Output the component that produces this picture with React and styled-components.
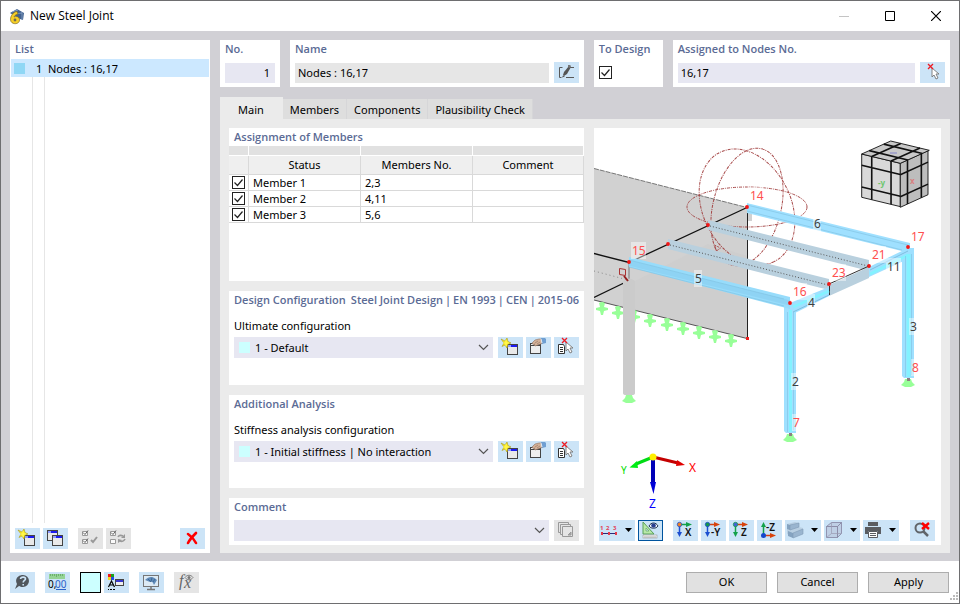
import React from "react";
import styled, { createGlobalStyle, css } from "styled-components";

const GlobalStyle = createGlobalStyle`
  *, *::before, *::after { box-sizing: border-box; }
  body { margin: 0; background: #fff; }
  body, button, input, select {
    font-family: "Noto Sans", "Open Sans", sans-serif;
    font-size: 11px;
    line-height: 16px;
    color: #000;
  }
`;

const color = {
  heading: "#5b6b95",
  body: "#d1d0d5",
  page: "#ebebeb",
  field: "#e7e7f2",
  button: "#cce4f7",
  off: "#e5e5e5",
  cyan: "#ccffff",
};

const checkMark =
  "url(\"data:image/svg+xml,%3Csvg xmlns='http://www.w3.org/2000/svg' viewBox='0 0 11 11'%3E%3Cpath d='M1.5 5.5l3 3 5-6' fill='none' stroke='%23222' stroke-width='1.2'/%3E%3C/svg%3E\")";

/* ---------- window ---------- */

const Window = styled.div`
  display: flex;
  flex-direction: column;
  min-height: 100vh;
  border: 1px solid #6e6e70;
  background: #fff;
`;

const TitleBar = styled.header`
  display: flex;
  align-items: center;
  height: 30px;
  padding-left: 8px;
`;

const Title = styled.h1`
  flex: 1;
  margin: 0 0 0 5px;
  font-family: "Open Sans", sans-serif;
  font-size: 12px;
  font-weight: 400;
  line-height: 16px;
`;

const CaptionButton = styled.button`
  width: 46px;
  height: 30px;
  padding: 0;
  border: 0;
  background: none;
  svg { display: block; margin: 0 auto; }
`;

const Body = styled.main`
  display: flex;
  flex: 1;
  gap: 10px;
  padding: 9px 9px 8px;
  background: ${color.body};
`;

const Panel = styled.section`
  display: flex;
  flex-direction: column;
  min-width: 0;
  padding: 0 5px 4px;
  background: #fff;
`;

const Heading = styled.h2`
  display: flex;
  justify-content: space-between;
  margin: 0;
  font-family: "Open Sans", sans-serif;
  font-size: 11px;
  font-weight: 600;
  line-height: 17px;
  white-space: nowrap;
  color: ${color.heading};
`;

const HeadingParts = styled.span`
  display: flex;
  gap: 2px;
`;

/* ---------- list ---------- */

const ListPanel = styled(Panel)`
  flex: 0 0 200px;
  padding: 0 1px 4px;
`;

const ListHeading = styled(Heading)`
  padding-left: 4px;
`;

const ListBody = styled.ul`
  flex: 1;
  margin: 2px 0 5px;
  padding: 0;
  list-style: none;
  background: linear-gradient(90deg, transparent 21px, #e6e6e6 21px, #e6e6e6 22px, transparent 22px,
    transparent 33px, #e6e6e6 33px, #e6e6e6 34px, transparent 34px);
`;

const ListItem = styled.li`
  display: grid;
  grid-template-columns: 21px 13px 1fr;
  align-items: center;
  height: 18px;
  line-height: 18px;
  background: #cce8ff;
  span:nth-child(2) { padding: 1px 0 0 4px; }
  span:nth-child(3) { padding: 1px 0 0 3px; }
`;

const ListSwatch = styled.span`
  width: 11px;
  height: 11px;
  margin-left: 3px;
  background: #8fd7f5;
`;

/* ---------- buttons ---------- */

const ButtonRow = styled.div`
  display: flex;
  align-items: center;
  gap: 3px;
`;

const ListButtons = styled(ButtonRow)`
  padding: 0 4px;
`;

const IconButton = styled.button`
  display: flex;
  flex: none;
  align-items: center;
  justify-content: center;
  width: ${(p) => (p.$menu ? 36 : 25)}px;
  height: 21px;
  padding: 0;
  border: 0;
  background: ${(p) => (p.disabled ? color.off : color.button)};
  ${(p) => p.$pressed && css`box-shadow: inset 0 0 0 1px #00549e;`}
  svg { display: block; flex: none; }
`;

const Gap = styled.span`
  flex: ${(p) => (p.$fill ? "1" : `0 0 ${p.$size}px`)};
`;

const PushButton = styled.button`
  width: 81px;
  height: 21px;
  padding: 0;
  border: 1px solid #adadad;
  background: #e1e1e1;
`;

/* ---------- header fields ---------- */

const MainColumn = styled.div`
  display: flex;
  flex: 1;
  flex-direction: column;
  min-width: 0;
`;

const FieldRow = styled.div`
  display: flex;
  gap: 10px;
  margin-bottom: 10px;
`;

const FieldPanel = styled(Panel)`
  flex: ${(p) => p.$flex};
`;

const FieldLine = styled.div`
  display: flex;
  align-items: center;
  gap: 5px;
  margin-top: 5px;
  height: 21px;
`;

const TextInput = styled.input`
  flex: 1;
  width: 100%;
  min-width: 0;
  height: 20px;
  padding: 0 3px;
  border: 0;
  background: ${(p) => (p.readOnly ? "#e6e6e6" : color.field)};
`;

const NumberInput = styled(TextInput)`
  padding-right: 5px;
  text-align: right;
`;

const CheckBox = styled.input`
  appearance: none;
  display: block;
  width: 13px;
  height: 13px;
  margin: 0;
  border: 1px solid #222;
  background: #fff;
  &:checked { background-image: ${checkMark}; }
`;

/* ---------- tabs ---------- */

const Tabs = styled.div`
  display: flex;
  align-items: flex-end;
  height: 22px;
`;

const Tab = styled.button`
  height: ${(p) => (p.$active ? 22 : 20)}px;
  padding: ${(p) => (p.$active ? "3px 18px 0" : "1px 7px 0")};
  border: 0;
  border-right: 1px solid ${(p) => (p.$active ? color.page : "#d6d6d8")};
  background: ${(p) => (p.$active ? color.page : "#dedede")};
  white-space: nowrap;
`;

const TabPage = styled.div`
  display: flex;
  flex: 1;
  gap: 10px;
  padding: 9px 9px 8px;
  background: ${color.page};
`;

const Column = styled.div`
  display: flex;
  flex: 355 1 0;
  flex-direction: column;
  gap: 10px;
  min-width: 0;
`;

/* ---------- member table ---------- */

const TablePanel = styled(Panel)`
  flex: 1;
  padding: 0 0 4px;
`;

const TableHeading = styled(Heading)`
  padding: 0 0 1px 5px;
`;

const MemberTable = styled.table`
  width: 100%;
  table-layout: fixed;
  border-collapse: separate;
  border-spacing: 0;
  th, td {
    padding: 0 4px;
    border-right: 1px solid #d9d9d9;
    border-bottom: 1px solid #d9d9d9;
    text-align: left;
    font-weight: 400;
  }
  th { height: 19px; background: #efefef; text-align: center; }
  td { height: 16px; line-height: 15px; }
  td:first-child { padding: 0 0 0 3px; }
  tr:first-child > td[data-band] {
    height: 10px;
    padding: 0;
    border-color: #fff;
    background: #e1e1e1;
  }
`;

/* ---------- configuration ---------- */

const ConfigPanel = styled(Panel)`
  padding-bottom: ${(p) => p.$bottom}px;
`;

const FieldLabel = styled.label`
  margin: 9px 0 3px;
  line-height: 17px;
`;

const Combo = styled.div`
  display: flex;
  flex: 1;
  align-items: center;
  gap: 3px;
  min-width: 0;
  height: 21px;
  padding: 0 4px 0 5px;
  background: ${color.field};
  svg { flex: none; }
`;

const ConfigLine = styled.div`
  display: flex;
  gap: 5px;
`;

const ComboSwatch = styled.span`
  flex: none;
  width: 11px;
  height: 11px;
  background: ${color.cyan};
`;

const ComboSelect = styled.select`
  appearance: none;
  flex: 1;
  min-width: 0;
  height: 21px;
  padding: 1px 2px 0;
  border: 0;
  background: transparent;
`;

/* ---------- model view ---------- */

const ViewPanel = styled.section`
  display: flex;
  flex: 347 1 0;
  flex-direction: column;
  min-width: 0;
  padding-bottom: 4px;
  background: #fff;
`;

const Scene = styled.svg`
  display: block;
  flex: 1;
  width: 100%;
  min-height: 0;
`;

const NodeLabel = styled.text`
  font-size: 12px;
  fill: ${(p) => (p.$member ? "#404040" : "#ff4f4f")};
`;

const ViewButtons = styled(ButtonRow)`
  padding: 4px 5px 0;
`;

const Footer = styled.footer`
  display: flex;
  align-items: center;
  gap: 10px;
  height: 42px;
  padding-left: 9px;
`;

const ColorButton = styled.button`
  width: 21px;
  height: 21px;
  padding: 0;
  border: 1px solid #000;
  background: ${color.cyan};
`;

const Grip = styled.svg`
  align-self: flex-end;
  margin: 0 0 2px -10px;
`;

/* ---------- icons ---------- */

const Icon = ({ children, w = 25 }) => (
  <svg width={w} height="21" viewBox={`0 0 ${w} 21`} fill="none" aria-hidden="true">
    {children}
  </svg>
);

const MiniWindow = ({ x, y }) => (
  <g>
    <rect x={x} y={y} width="11" height="11" fill="#444" />
    <rect x={x + 1} y={y + 1} width="9" height="2" fill="#8d9bff" />
    <rect x={x + 4} y={y + 1} width="6" height="2" fill="#1c1cf0" />
    <rect x={x + 1} y={y + 3} width="9" height="7" fill="#e9e9e9" />
  </g>
);

const Star = ({ x, y }) => (
  <g transform={`translate(${x} ${y})`}>
    <path d="M-5-4L-1-2 1-5 2-1.500 5 0 2 1 1 5-1 2-4 3.500-2 0z" fill="#ffee20" stroke="#a8981c" strokeWidth=".6" />
    <path d="M0-3V3M-3 0H3" stroke="#fff95e" />
  </g>
);

const NewIcon = () => (
  <Icon><MiniWindow x={9} y={7} /><Star x={8} y={6} /></Icon>
);

const CopyIcon = () => (
  <Icon><MiniWindow x={4} y={2} /><MiniWindow x={9} y={7} /></Icon>
);

const EditWindowIcon = () => (
  <Icon>
    <rect x="4" y="6" width="11" height="11" fill="#444" />
    <rect x="5" y="9" width="9" height="7" fill="#eee" />
    <path d="M5 7.500h4" stroke="#eee" />
    <path d="M6 6l3-3 4-1h3l1 4-5 2-3 1-1-1 1-1-2 .5z" fill="#d3b097" stroke="#8d705f" strokeWidth=".6" />
    <path d="M9 6l3-2M11 7l3-2" stroke="#8d705f" strokeWidth=".6" />
    <path d="M15 1h4l1 1v4l-4 1z" fill="#6f9fd2" />
    <path d="M15 2l1 4" stroke="#e5edf4" />
  </Icon>
);

const Cursor = ({ x, y }) => (
  <path
    transform={`translate(${x} ${y})`}
    d="M0 0v9l2-2 2 4 2-1-2-4h3z"
    fill="#fff"
    stroke="#777"
    strokeWidth=".9"
  />
);

const PickIcon = () => (
  <Icon>
    <Cursor x={12} y={6} />
    <path d="M8 2l5 5M13 2l-5 5" stroke="#ed1c24" strokeWidth="1.300" />
  </Icon>
);

const PickListIcon = () => (
  <Icon>
    <path d="M4.500 7.500h5l1 2v7h-6z" fill="#fff" stroke="#333" />
    <path d="M6 10.500h3M6 12.500h3M6 14.500h3" stroke="#333" />
    <Cursor x={12} y={5} />
    <path d="M8 1l5 5M13 1l-5 5" stroke="#ed1c24" strokeWidth="1.300" />
  </Icon>
);

const RenameIcon = () => (
  <Icon>
    <path d="M8.500 5.500h-3v10h2M12 15.500h8M16 5.500h4" stroke="#595959" />
    <path d="M9 13l1-3 5-6 2 1-4 7-3 2z" fill="#555" />
    <path d="M14 3l2 0 1 1-1 2-2-1z" fill="#777" />
    <path d="M8 15.500l1-2 2 1z" fill="#555" />
  </Icon>
);

const LibraryIcon = () => (
  <Icon>
    <g stroke="#999" fill="#e5e5e5">
      <path d="M4.500 2.500h10v10h-10z" />
      <path d="M6.500 4.500h10v10h-10z" />
      <path d="M8.500 6.500h10v10h-10z" />
      <path d="M14 15l3-3v3z" fill="#aaa" />
    </g>
  </Icon>
);

const SelectAllIcon = () => (
  <Icon>
    <path d="M4.500 3.500h5v4h-5zM4.500 11.500h5v4h-5z" fill="#fafafa" stroke="#999" />
    <path d="M5 4.500l2 2 3-4M5 12.500l2 2 3-4" stroke="#666" />
    <path d="M13 12l2 2 4-5" stroke="#999" strokeWidth="2" />
  </Icon>
);

const InvertIcon = () => (
  <Icon>
    <path d="M4.500 3.500h5v4h-5zM4.500 11.500h5v4h-5z" fill="#fafafa" stroke="#999" />
    <path d="M5 4.500l2 2 3-4" stroke="#666" />
    <path d="M12 9c1-2 3-2 5-1M19 11c-1 2-3 3-5 2" stroke="#999" strokeWidth="1.600" />
    <path d="M19 6v4h-4zM12 15v-4l4 1z" fill="#999" />
  </Icon>
);

const DeleteIcon = () => (
  <Icon><path d="M8 6c3 2 6 5 8 9M16 5c-3 3-6 6-8 10" stroke="#f00" strokeWidth="2.600" strokeLinecap="round" /></Icon>
);

const HelpIcon = () => (
  <Icon>
    <path d="M13 3a6 6 0 0 1 0 12c-2 0-3-.5-4-1l-4 3 2-5a6 6 0 0 1 6-9z" fill="#50565c" />
    <path d="M10.500 7c.3-2.500 5-2.500 5 0 0 1.500-2.300 1.500-2.300 3.500M13.200 12v1.500" stroke="#cce4f7" strokeWidth="1.600" />
  </Icon>
);

const UnitText = styled.text`
  font: 10px "Noto Sans", sans-serif;
`;

const UnitsIcon = () => (
  <Icon>
    <rect x="4" y="2" width="16" height="5" fill="#94d394" />
    <path d="M5.500 2v2M7.500 2v2M9.500 2v2M11.500 2v3M13.500 2v2M15.500 2v2M17.500 2v2" stroke="#5aa15a" strokeWidth=".7" />
    <UnitText x="3" y="16" fill="#000">0,</UnitText>
    <UnitText x="10" y="16" fill="#2b62c9">00</UnitText>
    <path d="M11 17.500h10" stroke="#2b62c9" />
  </Icon>
);

const DisplayIcon = () => (
  <Icon>
    <path d="M4 2h3v3h-3z" fill="#f01818" /><path d="M7 2h3v3h-3z" fill="#19a019" />
    <path d="M4 5h3v3h-3z" fill="#f4d81c" /><path d="M7 5h3v3h-3z" fill="#2449e8" />
    <path d="M4.500 15L7.500 9 10.500 15M5.500 13h4" stroke="#000" strokeWidth="1.200" />
    <path d="M4 17.500h1M6 17.500h2M9 17.500h2" stroke="#000" />
    <rect x="11" y="7" width="9" height="7" fill="#444" />
    <path d="M12 8h7v2h-7z" fill="#3838cf" /><path d="M12 10h7v3h-7z" fill="#eee" />
  </Icon>
);

const MonitorIcon = () => (
  <Icon>
    <rect x="4.500" y="3.500" width="15" height="11" fill="#dceaf5" stroke="#767676" />
    <path d="M12 15v2M8 17.500h8" stroke="#767676" strokeWidth="1.500" />
    <path d="M6 8c4-4 8-4 12 0l-3 5c-1-3-2-4-4-3z" fill="#5f8ab8" />
    <path d="M9 7l3 3M13 5.500l-1 4M16 7l-2 3" stroke="#365f8c" strokeWidth=".8" />
  </Icon>
);

const FxText = styled.text`
  font: italic 16px "Liberation Serif", serif;
`;

const FormulaIcon = () => (
  <Icon>
    <FxText x="5" y="14" fill="#666">f</FxText>
    <FxText x="10" y="16" fill="#666">x</FxText>
    <path d="M11 5.500c2-3 6-3 8 0-2 3-6 3-8 0z" stroke="#808080" />
    <circle cx="15" cy="5.500" r="1.500" fill="#777" />
  </Icon>
);

const MenuArrow = () => <path d="M26 8h7l-3.500 4z" fill="#000" />;

const TinyText = styled.text`
  font: 700 6px "Noto Sans", sans-serif;
`;

const NumberingIcon = () => (
  <Icon w={36}>
    <TinyText x="1" y="10" fill="#e04258">1</TinyText>
    <TinyText x="7" y="10" fill="#e04258">2</TinyText>
    <TinyText x="14" y="10" fill="#e04258">3</TinyText>
    <path d="M3 13.500h15" stroke="#2a2a78" />
    <path d="M2 12h2v3h-2zM9 12h2v3h-2zM16 12h2v3h-2z" fill="#e8384a" />
    <MenuArrow />
  </Icon>
);

const MeasureIcon = () => (
  <Icon>
    <path d="M5 2v12h11z" fill="#b7e8a8" stroke="#58a058" />
    <path d="M8 8v3h3z" fill="#cce4f7" stroke="#58a058" strokeWidth=".6" />
    <rect x="5" y="15" width="14" height="3" fill="#f4f4f4" stroke="#999" strokeWidth=".6" />
    <path d="M7 16v2M9 16v2M11 16v2M13 16v2M15 16v2M17 16v2" stroke="#888" strokeWidth=".6" />
    <path d="M11 6c2-4 7-4 9 0-2 3-7 3-9 0z" fill="#fff" stroke="#243852" />
    <circle cx="15.500" cy="5.500" r="2.300" fill="#283f8f" />
  </Icon>
);

const AxisText = styled.text`
  font: 600 10px "Noto Sans", sans-serif;
`;

const AxisIcon = ({ label, h, v, dot, up }) => (
  <Icon>
    {up ? (
      <>
        <path d="M6.500 15V5" stroke={v} strokeWidth="1.500" /><path d="M4 7l2.500-5L9 7z" fill={v} />
        <path d="M8 15.500h6" stroke={h} strokeWidth="1.500" /><path d="M13 13l6 2.500-6 2.500z" fill={h} />
        <circle cx="6.500" cy="15.500" r="2.500" fill={dot} />
        <AxisText x="9" y="11" fill="#111">{label}</AxisText>
      </>
    ) : (
      <>
        <path d="M6.500 6v8" stroke={v} strokeWidth="1.500" /><path d="M4 12l2.500 5L9 12z" fill={v} />
        <path d="M8 4.500h6" stroke={h} strokeWidth="1.500" /><path d="M13 2l6 2.500-6 2.500z" fill={h} />
        <circle cx="6.500" cy="4.500" r="2.200" fill={dot} stroke={v} strokeWidth=".8" />
        <AxisText x={label.length > 1 ? 10 : 12} y="16" fill="#111">{label}</AxisText>
      </>
    )}
  </Icon>
);

const ShadingIcon = () => (
  <Icon w={36}>
    <path d="M2 4l8-2 4 1v4l4 1v5l-8 4-8-3z" fill="#b9cfe2" />
    <path d="M2 4l3 1v5l-3-1zM3 11l5 2v5l-5-2z" fill="#85a3c0" />
    <path d="M5 5l9-2v4l-9 3zM8 13l10-4v5l-10 4z" fill="#9ab5cf" stroke="#7f9ab6" strokeWidth=".6" />
    <MenuArrow />
  </Icon>
);

const BoxIcon = () => (
  <Icon w={36}>
    <path d="M2.500 6.500l5-4h10l-4 4zM13.500 6.500l4-4v11l-4 4zM2.500 6.500h11v11h-11z" fill="#b9c6dd" fillOpacity=".7" stroke="#8b8ca8" strokeWidth=".9" />
    <path d="M7.500 2.500v11h10M7.500 13.500l-5 4" stroke="#9a9ab2" strokeWidth=".7" />
    <MenuArrow />
  </Icon>
);

const PrintIcon = () => (
  <Icon w={36}>
    <path d="M5 2h10v4h-10zM2 7h16v7h-3v-3h-10v3h-3z" fill="#5a5d62" />
    <path d="M5.500 11.500h9v6h-9z" fill="#fff" stroke="#5a5d62" />
    <path d="M7 13.500h6M7 15.500h6" stroke="#5a5d62" />
    <MenuArrow />
  </Icon>
);

const ClearSearchIcon = () => (
  <Icon>
    <circle cx="10" cy="8" r="4.500" stroke="#60656a" strokeWidth="2" />
    <path d="M13 11l5 5" stroke="#60656a" strokeWidth="2.500" />
    <path d="M12 3l7 6M19 3l-7 6" stroke="#f00" strokeWidth="2.400" />
  </Icon>
);

const Chevron = () => (
  <svg width="11" height="7" viewBox="0 0 11 7" fill="none" aria-hidden="true">
    <path d="M1 1l4.500 4.500L10 1" stroke="#555" strokeWidth="1.200" />
  </svg>
);

const AppIcon = () => (
  <svg width="16" height="17" viewBox="0 0 16 17" aria-hidden="true">
    <path d="M1 5l7-4 7 4-1 7-3-1z" fill="#41618e" />
    <path d="M3 4l6-2M5 6l8-1M13 4v8" stroke="#8ba5c9" strokeWidth=".8" />
    <path d="M8 3.500C4 4 1.500 8 1.500 11.500c0 5.500 9 5.500 9 .5 0-3-3-4.500-5.500-3C5.500 7.500 7 6.500 9 6z" fill="#f6cf25" stroke="#7d6a24" strokeWidth=".7" />
    <circle cx="6" cy="12" r="1.400" fill="#6f6a50" />
  </svg>
);

/* ---------- navigation cube ---------- */

const cuts = [0, 0.26, 0.76, 1];

const cubeFaces = [
  { o: [861.7, 154], u: [38.6, 9.300], v: [0, 43.300], fill: "#d9d9d9" },
  { o: [900.3, 163.3], u: [27.7, -12.600], v: [0, 44], fill: "#bdbdbd" },
  { o: [861.7, 154], u: [38.6, 9.300], v: [29, -13], fill: "#c9c9c9" },
];

const facePoint = (face, s, t) =>
  `${face.o[0] + face.u[0] * s + face.v[0] * t},${face.o[1] + face.u[1] * s + face.v[1] * t}`;

const NavText = styled.text`
  font: 700 8px "Noto Sans", sans-serif;
`;

const NavCube = () => (
  <g stroke="#111" strokeLinejoin="round">
    {cubeFaces.map((face, i) => (
      <g key={i}>
        <path
          d={`M${facePoint(face, 0, 0)}L${facePoint(face, 1, 0)}L${facePoint(face, 1, 1)}L${facePoint(face, 0, 1)}z`}
          fill={face.fill}
          strokeWidth=".9"
        />
        {cuts.slice(1, 3).map((c) => (
          <path
            key={c}
            d={`M${facePoint(face, c, 0)}L${facePoint(face, c, 1)}M${facePoint(face, 0, c)}L${facePoint(face, 1, c)}`}
            strokeWidth="1.600"
          />
        ))}
      </g>
    ))}
    <g stroke="none">
      <NavText x="878" y="186" fill="#6cc66c">-y</NavText>
      <NavText x="910" y="184" fill="#d98080">x</NavText>
      <path d="M890 153h7" stroke="#9a9ac8" strokeWidth="1.500" />
    </g>
  </g>
);

/* ---------- structural model ---------- */

const nodeLabels = [
  ["14", 750, 200], ["15", 632, 255], ["17", 911, 241], ["21", 872, 259],
  ["23", 832, 277], ["16", 793, 296], ["7", 793, 427], ["8", 912, 372],
];

const memberLabels = [
  ["6", 814, 228], ["5", 695, 283], ["11", 887, 271],
  ["4", 808, 307], ["3", 910, 331], ["2", 792, 386],
];

const nodes = [
  [747, 207], [708, 225], [668, 244], [629, 262], [908, 247], [869, 266], [829, 284], [790, 303],
];

const lineSupports = [602, 618, 634, 650, 667, 683, 699, 715, 731];
const baseSupports = [[629, 395], [790, 434], [908, 379]];

const LabelSet = ({ items, member }) =>
  items.map(([text, x, y]) => (
    <g key={text}>
      <rect x={x - 1} y={y - 13} width={text.length * 7 + 1} height="17" fill="#fff" fillOpacity=".45" />
      <NodeLabel $member={member} x={x} y={y}>{text}</NodeLabel>
    </g>
  ));

const AxisLabel = styled.text`
  font-size: ${(p) => p.$size || 12}px;
`;

const Model = () => (
  <Scene viewBox="594 128 347 388" role="img" aria-label="Steel joint model">
    <path d="M594 168.500L747 207.500V338.500L594 300z" fill="#d1d1d1" />
    <path d="M635 281L708 244 747 256V338L635 310z" fill="#cecece" />
    <path d="M747 207H752V221H747z" fill="#d1d1d1" />
    <path d="M594 168.500L747 207.500" stroke="#777" strokeDasharray="5 1" />
    <path d="M594 300L747 338.500" stroke="#555" />
    <path d="M747.500 210V338" stroke="#222" />
    <g fill="#98ff98">
      {lineSupports.map((x) => (
        <path
          key={x}
          transform={`translate(${x} ${303 + Math.round((x - 602) / 4)})`}
          d="M-3 0Q0-2 3 0L2 4 6 5 6 7 2 8 1 12H-1L-2 8-6 7-6 5-2 4z"
        />
      ))}
      {baseSupports.map(([x, y]) => (
        <path key={x} transform={`translate(${x} ${y})`} d="M-3 0H3L4 3 7 6 3 8H-3L-7 6-4 3z" />
      ))}
    </g>
    <g fill="none" stroke="#a03a3a" strokeWidth="1" strokeDasharray="3 1 1 1" opacity=".9">
      <ellipse cx="747" cy="207" rx="60" ry="20" />
      <ellipse cx="747" cy="207" rx="61" ry="44" transform="rotate(63.600 747 207)" />
      <ellipse cx="747" cy="207" rx="60" ry="34" transform="rotate(-75.800 747 207)" />
    </g>
    <g fill="none" stroke="#111">
      <path d="M594 253.500L629 262.500L747 207.500" strokeWidth="1.300" />
      <path d="M629 262V281" stroke="#777" />
      <path d="M594 297.500L628 281" strokeWidth="1.300" />
      <path d="M594 271L628 280" stroke="#888" strokeDasharray="1 3" />
    </g>
    <path d="M623 281Q629 276 635 281V393Q635 395 632 395H626Q623 395 623 393z" fill="#cbcbcb" />
    <path d="M619.500 268.500l6 1v6l-6-1z" fill="none" stroke="#a33" />
    <path d="M624 276l4 5" stroke="#932020" strokeWidth="2" />
    <path d="M714.500 245l6 3-4 3z" fill="none" stroke="#a55" strokeDasharray="2 1" />

    <g fill="#b9d0de">
      <path d="M708 220L869 260V271L708 230z" />
      <path d="M668 239L829 279V290L668 249z" />
      <path d="M829 285L869 267V278L829 296z" />
    </g>
    <g fill="none" stroke="#555" strokeDasharray="1 2">
      <path d="M710 226L868 266" />
      <path d="M670 245L828 285" />
    </g>
    <path d="M829 284L869 266M829.500 286v9M869.500 268v8" stroke="#333" fill="none" />

    <g fill="#9fe0ff">
      <path d="M747 203L910 243V253L747 213z" />
      <path d="M869 267L908 248V259L869 277z" />
      <path d="M790 303L829 287V296L793 314z" />
      <path d="M902 248H914V378H904L902 376z" />
      <path d="M784 304H796V433H786L784 431z" />
    </g>
    <path d="M629 257L790 297V309L629 267z" fill="#97dcfb" />
    <path d="M629 263L790 303" stroke="#8ed3f4" strokeWidth="5" />
    <g fill="none" stroke="#83f2ff">
      <path d="M790.500 310V432" strokeWidth="3" />
      <path d="M908.500 254V377" strokeWidth="4" />
      <path d="M870 274L908 255M793 307L829 291" strokeWidth="3" />
    </g>
    <g fill="none" stroke="#7fbfdf" strokeWidth="1">
      <path d="M787.500 312V432M793.500 312V430M905.500 256V377M911.500 254V375" opacity=".6" />
      <path d="M629 267L784 306M629 260L784 299M747 211L902 250M747 205L908 245" opacity=".6" />
      <path d="M870 270L908 251M793 312L829 295" />
    </g>
    {nodes.map(([x, y]) => <circle key={x} cx={x} cy={y} r="1.900" fill="#f21616" />)}
    <path d="M746 337h3v3h-3z" fill="#f02020" />
    <path d="M789 433h3v3h-3zM907 378h3v3h-3z" fill="#8b8080" />
    <LabelSet items={nodeLabels} />
    <LabelSet items={memberLabels} member />

    <g fill="none" strokeWidth="3">
      <path d="M653 457L678 463" stroke="#c40000" />
      <path d="M653 457L636 464" stroke="#00dc14" />
      <path d="M653 457V484" stroke="#0000b8" strokeWidth="4" />
    </g>
    <path d="M677 460L685 465 676 466z" fill="#e00000" />
    <path d="M637 461L629.500 467.500 638 468z" fill="#00ee14" />
    <path d="M650 482H656L653.500 494z" fill="#0000d8" />
    <circle cx="653" cy="457" r="3.500" fill="#fff000" />
    <AxisLabel x="689" y="472" fill="#f00">X</AxisLabel>
    <AxisLabel x="621" y="474" fill="#0d0" $size={10}>Y</AxisLabel>
    <AxisLabel x="649" y="508" fill="#00f">Z</AxisLabel>
    <NavCube />
  </Scene>
);

/* ---------- page ---------- */

const members = [
  ["Member 1", "2,3"],
  ["Member 2", "4,11"],
  ["Member 3", "5,6"],
];

const ConfigRow = ({ id, option }) => (
  <ConfigLine>
    <Combo>
      <ComboSwatch />
      <ComboSelect id={id}><option>{option}</option></ComboSelect>
      <Chevron />
    </Combo>
    <ButtonRow>
      <IconButton aria-label="New configuration"><NewIcon /></IconButton>
      <IconButton aria-label="Edit configuration"><EditWindowIcon /></IconButton>
      <IconButton aria-label="Pick configuration"><PickListIcon /></IconButton>
    </ButtonRow>
  </ConfigLine>
);

export default function App() {
  return (
    <Window>
      <GlobalStyle />
      <TitleBar>
        <AppIcon />
        <Title>New Steel Joint</Title>
        <CaptionButton aria-label="Minimize" disabled>
          <svg width="10" height="10" viewBox="0 0 10 10"><path d="M0 5.500h10" stroke="#c4c4c4" /></svg>
        </CaptionButton>
        <CaptionButton aria-label="Maximize">
          <svg width="10" height="10" viewBox="0 0 10 10"><path d="M.5.5h9v9h-9z" fill="none" stroke="#000" /></svg>
        </CaptionButton>
        <CaptionButton aria-label="Close">
          <svg width="10" height="10" viewBox="0 0 10 10"><path d="M0 0l10 10M10 0L0 10" stroke="#000" strokeWidth="1.200" /></svg>
        </CaptionButton>
      </TitleBar>

      <Body>
        <ListPanel>
          <ListHeading>List</ListHeading>
          <ListBody>
            <ListItem><ListSwatch /><span>1</span><span>Nodes : 16,17</span></ListItem>
          </ListBody>
          <ListButtons>
            <IconButton aria-label="New"><NewIcon /></IconButton>
            <IconButton aria-label="Copy"><CopyIcon /></IconButton>
            <Gap $size={4} />
            <IconButton aria-label="Select all" disabled><SelectAllIcon /></IconButton>
            <IconButton aria-label="Invert selection" disabled><InvertIcon /></IconButton>
            <Gap $fill />
            <IconButton aria-label="Delete"><DeleteIcon /></IconButton>
          </ListButtons>
        </ListPanel>

        <MainColumn>
          <FieldRow>
            <FieldPanel $flex="0 0 60px">
              <Heading as="label" htmlFor="no">No.</Heading>
              <FieldLine><NumberInput id="no" defaultValue="1" /></FieldLine>
            </FieldPanel>
            <FieldPanel $flex="294 1 0">
              <Heading as="label" htmlFor="name">Name</Heading>
              <FieldLine>
                <TextInput id="name" value="Nodes : 16,17" readOnly />
                <IconButton aria-label="Edit name"><RenameIcon /></IconButton>
              </FieldLine>
            </FieldPanel>
            <FieldPanel $flex="0 0 69px">
              <Heading as="label" htmlFor="design">To Design</Heading>
              <FieldLine><CheckBox id="design" type="checkbox" defaultChecked /></FieldLine>
            </FieldPanel>
            <FieldPanel $flex="277 1 0">
              <Heading as="label" htmlFor="assigned">Assigned to Nodes No.</Heading>
              <FieldLine>
                <TextInput id="assigned" defaultValue="16,17" />
                <IconButton aria-label="Pick nodes"><PickIcon /></IconButton>
              </FieldLine>
            </FieldPanel>
          </FieldRow>

          <Tabs role="tablist">
            <Tab role="tab" aria-selected="true" $active>Main</Tab>
            <Tab role="tab">Members</Tab>
            <Tab role="tab">Components</Tab>
            <Tab role="tab">Plausibility Check</Tab>
          </Tabs>

          <TabPage>
            <Column>
              <TablePanel>
                <TableHeading>Assignment of Members</TableHeading>
                <MemberTable>
                  <colgroup><col width="20" /><col width="112" /><col width="112" /><col /></colgroup>
                  <thead>
                    <tr><td data-band /><td data-band /><td data-band /><td data-band /></tr>
                    <tr><th aria-label="Active" /><th>Status</th><th>Members No.</th><th>Comment</th></tr>
                  </thead>
                  <tbody>
                    {members.map(([name, numbers]) => (
                      <tr key={name}>
                        <td><CheckBox type="checkbox" aria-label={name} defaultChecked /></td>
                        <td>{name}</td>
                        <td>{numbers}</td>
                        <td />
                      </tr>
                    ))}
                  </tbody>
                </MemberTable>
              </TablePanel>

              <ConfigPanel $bottom={27}>
                <Heading>
                  <span>Design Configuration</span>
                  <HeadingParts>
                    <span>Steel Joint Design</span>
                    <span>|</span>
                    <span>EN 1993</span>
                    <span>|</span>
                    <span>CEN</span>
                    <span>|</span>
                    <span>2015-06</span>
                  </HeadingParts>
                </Heading>
                <FieldLabel htmlFor="ultimate">Ultimate configuration</FieldLabel>
                <ConfigRow id="ultimate" option="1 - Default" />
              </ConfigPanel>

              <ConfigPanel $bottom={26}>
                <Heading>Additional Analysis</Heading>
                <FieldLabel htmlFor="stiffness">Stiffness analysis configuration</FieldLabel>
                <ConfigRow id="stiffness" option="1 - Initial stiffness | No interaction" />
              </ConfigPanel>

              <ConfigPanel $bottom={4}>
                <Heading as="label" htmlFor="comment">Comment</Heading>
                <FieldLine>
                  <Combo>
                    <ComboSelect id="comment"><option /></ComboSelect>
                    <Chevron />
                  </Combo>
                  <IconButton aria-label="Comment library" disabled><LibraryIcon /></IconButton>
                </FieldLine>
              </ConfigPanel>
            </Column>

            <ViewPanel>
              <Model />
              <ViewButtons>
                <IconButton $menu aria-label="Numbering"><NumberingIcon /></IconButton>
                <IconButton $pressed aria-label="Dimensions"><MeasureIcon /></IconButton>
                <Gap $size={4} />
                <IconButton aria-label="View in X"><AxisIcon label="X" h="#14a14a" v="#1c4fd0" dot="#f58220" /></IconButton>
                <IconButton aria-label="View against Y"><AxisIcon label="-Y" h="#d8430c" v="#1c4fd0" dot="#14964a" /></IconButton>
                <IconButton aria-label="View in Z"><AxisIcon label="Z" h="#d8430c" v="#14a14a" dot="#4263d8" /></IconButton>
                <IconButton aria-label="View against Z"><AxisIcon up label="-Z" h="#d8430c" v="#14a14a" dot="#1648cc" /></IconButton>
                <IconButton $menu aria-label="Shading"><ShadingIcon /></IconButton>
                <IconButton $menu aria-label="Transparency"><BoxIcon /></IconButton>
                <IconButton $menu aria-label="Print"><PrintIcon /></IconButton>
                <Gap $size={5} />
                <IconButton aria-label="Reset view"><ClearSearchIcon /></IconButton>
              </ViewButtons>
            </ViewPanel>
          </TabPage>
        </MainColumn>
      </Body>

      <Footer>
        <IconButton aria-label="Help"><HelpIcon /></IconButton>
        <IconButton aria-label="Units"><UnitsIcon /></IconButton>
        <ButtonRow>
          <ColorButton aria-label="Color" />
          <IconButton aria-label="Display properties"><DisplayIcon /></IconButton>
        </ButtonRow>
        <IconButton aria-label="Screen"><MonitorIcon /></IconButton>
        <IconButton aria-label="Formula" disabled><FormulaIcon /></IconButton>
        <Gap $fill />
        <PushButton>OK</PushButton>
        <PushButton>Cancel</PushButton>
        <PushButton>Apply</PushButton>
        <Grip width="10" height="9" viewBox="0 0 10 9" aria-hidden="true">
          <path d="M7 0h2v2h-2zM4 3h2v2h-2zM7 3h2v2h-2zM1 6h2v2h-2zM4 6h2v2h-2zM7 6h2v2h-2z" fill="#bbb" />
        </Grip>
      </Footer>
    </Window>
  );
}
